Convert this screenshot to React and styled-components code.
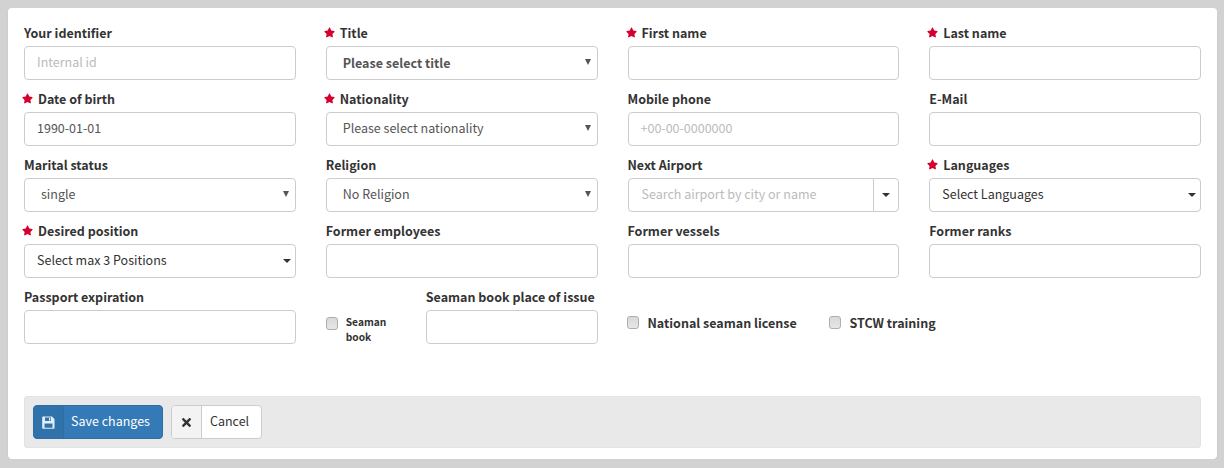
import React from 'react'
import styled, { createGlobalStyle } from 'styled-components'
import { FaStar, FaTimes } from 'react-icons/fa'

const Global = createGlobalStyle`
  html, body { margin: 0; padding: 0; background: #d2d2d2; }
  body { font-family: "Noto Sans CJK SC", "Source Sans Pro", "Open Sans", sans-serif; font-size: 12.5px; color: #333; }
`
const Card = styled.form`
  box-sizing: border-box;
  width: 1209px;
  height: 451px;
  margin: 8px 0 0 8px;
  padding: 16px 16px 11px;
  background: #fff;
  border-radius: 4px;
  box-shadow: 0 1px 2px rgba(0,0,0,.08);
  display: flex;
  flex-direction: column;
`
const Grid = styled.div`
  display: grid;
  grid-template-columns: repeat(4, 271.75px);
  column-gap: 30px;
  row-gap: 10px;
`
const Field = styled.div`
  flex: 1;
  display: flex;
  flex-direction: column;
  min-width: 0;
`
const Label = styled.label`
  position: relative;
  box-sizing: border-box;
  display: flex;
  align-items: center;
  height: 18px;
  margin-bottom: 4px;
  padding-bottom: 2px;
  padding-left: ${p => (p.$required ? '14px' : '0')};
  font-size: 12.5px;
  font-weight: 700;
  color: #333;
  white-space: nowrap;
`
const Star = styled(FaStar)`
  position: absolute;
  left: -2px;
  top: 3px;
  width: 11px;
  height: 11px;
  color: #d6002e;
`
const Input = styled.input`
  box-sizing: border-box;
  width: 100%;
  height: 34px;
  padding: 4px 12px 8px;
  border: 1px solid #ccc;
  border-radius: 4px;
  background: #fff;
  font: inherit;
  font-size: 12.5px;
  color: #555;
  outline: none;
  &::placeholder { color: #bbb; opacity: 1; }
`
const SelectWrap = styled.div`
  position: relative;
  height: 34px;
  &::after {
    content: '';
    position: absolute;
    right: ${p => (p.$bs ? '5px' : '7px')};
    top: ${p => (p.$bs ? '15px' : '13px')};
    border-top: ${p => (p.$bs ? '4px solid #333' : '6px solid #555')};
    border-left: ${p => (p.$bs ? '4px' : '3px')} solid transparent;
    border-right: ${p => (p.$bs ? '4px' : '3px')} solid transparent;
  }
`
const Select = styled.select`
  box-sizing: border-box;
  width: 100%;
  height: 34px;
  padding: 0 ${p => p.$pad ?? 16}px ${p => (p.$bold ? 2 : 4)}px;
  border: 1px solid #ccc;
  border-radius: 4px;
  background: #fff;
  font: inherit;
  font-size: 12.5px;
  font-weight: ${p => (p.$bold ? 700 : 400)};
  color: ${p => (p.$dark ? '#333' : '#555')};
  appearance: none;
  outline: none;
`
const Combo = styled.div`
  display: flex;
  height: 34px;
  box-sizing: border-box;
`
const ComboInput = styled(Input)`
  flex: 1;
  min-width: 0;
  padding-left: 13px;
  border-radius: 4px 0 0 4px;
`
const ComboToggle = styled.button`
  box-sizing: border-box;
  width: 26px;
  height: 34px;
  padding: 0;
  margin-left: -1px;
  border: 1px solid #ccc;
  border-radius: 0 4px 4px 0;
  background: #fff;
  display: flex;
  align-items: center;
  justify-content: center;
  &::after {
    content: '';
    border-top: 4px solid #333;
    border-left: 4px solid transparent;
    border-right: 4px solid transparent;
  }
`
const Checkbox = styled.input.attrs({ type: 'checkbox' })`
  box-sizing: border-box;
  flex: none;
  width: 12px;
  height: 13px;
  margin: 0;
  appearance: none;
  border: 1px solid #aeaeae;
  border-radius: 3px;
  background: linear-gradient(#d9d9d9, #e6e6e6);
`
const SeamanCell = styled.div`
  display: flex;
  align-items: flex-end;
`
const SeamanCheck = styled.div`
  flex: none;
  display: flex;
  align-items: flex-start;
  box-sizing: border-box;
  width: 100px;
  height: 34px;
  padding-top: 4px;
  gap: 8px;
  ${Checkbox} { margin-top: 3px; }
`
const SmallLabel = styled.span`
  font-size: 10.2px;
  font-weight: 700;
  line-height: 15px;
  width: 46px;
  color: #333;
`
const ChecksCell = styled.div`
  grid-column: span 2;
  display: flex;
  align-items: flex-end;
  margin-left: -1px;
  padding-bottom: 9px;
`
const CheckItem = styled.div`
  display: flex;
  align-items: center;
  width: ${p => p.$w}px;
  height: 26px;
  gap: 9px;
  font-weight: 700;
  color: #333;
  white-space: nowrap;
`
const Actions = styled.div`
  margin-top: auto;
  height: 52px;
  box-sizing: border-box;
  padding: 8px 8px;
  background: #e9e9e9;
  border: 1px solid #e3e3e3;
  border-radius: 3px;
  display: flex;
  align-items: center;
  gap: 8px;
`
const Button = styled.button`
  box-sizing: border-box;
  height: 34px;
  padding: 0;
  display: flex;
  align-items: stretch;
  border: 1px solid ${p => (p.$primary ? '#2e6da4' : '#ccc')};
  border-radius: 4px;
  background: ${p => (p.$primary ? '#337ab7' : '#fff')};
  color: ${p => (p.$primary ? '#fff' : '#333')};
  font: inherit;
  font-size: 12.5px;
  overflow: hidden;
`
const ButtonIcon = styled.span`
  box-sizing: border-box;
  width: 30px;
  display: flex;
  align-items: center;
  justify-content: center;
  background: ${p => (p.$primary ? 'rgba(0,0,0,.06)' : '#f3f3f3')};
  border-right: 1px solid ${p => (p.$primary ? '#2e6da4' : '#ccc')};
  font-size: 13px;
`
const ButtonText = styled.span`
  display: flex;
  align-items: center;
  padding: ${p => (p.$primary ? '0 12px 4px 7px' : '0 12px 4px 8px')};
`

const SaveIcon = () => (
  <svg width="13" height="13" viewBox="0 0 13 13">
    <path
      fill="#e3eef8"
      fillRule="evenodd"
      d="M1 0.5h9l2.5 2.5v9a.8.8 0 0 1-.8.8H1a.8.8 0 0 1-.8-.8V1.3A.8.8 0 0 1 1 .5zM3 1.5v3.5h6V1.5zM7 2h1.3v2.5H7zM2.5 7.5V11.8h8V7.5z"
    />
  </svg>
)

const F = ({ label, required, children }) => (
  <Field>
    <Label $required={required}>
      {required && <Star />}
      {label}
    </Label>
    {children}
  </Field>
)

const Sel = ({ value, bs, ...rest }) => (
  <SelectWrap $bs={bs}>
    <Select defaultValue={value} {...rest}>
      <option>{value}</option>
    </Select>
  </SelectWrap>
)

export default function App() {
  return (
    <>
      <Global />
      <Card>
        <Grid>
          <F label="Your identifier"><Input placeholder="Internal id" /></F>
          <F label="Title" required><Sel value="Please select title" $bold /></F>
          <F label="First name" required><Input /></F>
          <F label="Last name" required><Input /></F>

          <F label="Date of birth" required><Input defaultValue="1990-01-01" /></F>
          <F label="Nationality" required><Sel value="Please select nationality" /></F>
          <F label="Mobile phone"><Input placeholder="+00-00-0000000" /></F>
          <F label="E-Mail"><Input /></F>

          <F label="Marital status"><Sel value="single" /></F>
          <F label="Religion"><Sel value="No Religion" /></F>
          <F label="Next Airport">
            <Combo>
              <ComboInput placeholder="Search airport by city or name" />
              <ComboToggle type="button" />
            </Combo>
          </F>
          <F label="Languages" required><Sel value="Select Languages" bs $pad={12} $dark /></F>

          <F label="Desired position" required><Sel value="Select max 3 Positions" bs $pad={12} $dark /></F>
          <F label="Former employees"><Input /></F>
          <F label="Former vessels"><Input /></F>
          <F label="Former ranks"><Input /></F>

          <F label="Passport expiration"><Input /></F>
          <SeamanCell>
            <SeamanCheck>
              <Checkbox />
              <SmallLabel>Seaman book</SmallLabel>
            </SeamanCheck>
            <F label="Seaman book place of issue"><Input /></F>
          </SeamanCell>
          <ChecksCell>
            <CheckItem $w={202}><Checkbox />National seaman license</CheckItem>
            <CheckItem $w={150}><Checkbox />STCW training</CheckItem>
          </ChecksCell>
        </Grid>
        <Actions>
          <Button type="button" $primary>
            <ButtonIcon $primary><SaveIcon /></ButtonIcon>
            <ButtonText $primary>Save changes</ButtonText>
          </Button>
          <Button type="button">
            <ButtonIcon><FaTimes /></ButtonIcon>
            <ButtonText>Cancel</ButtonText>
          </Button>
        </Actions>
      </Card>
    </>
  )
}
